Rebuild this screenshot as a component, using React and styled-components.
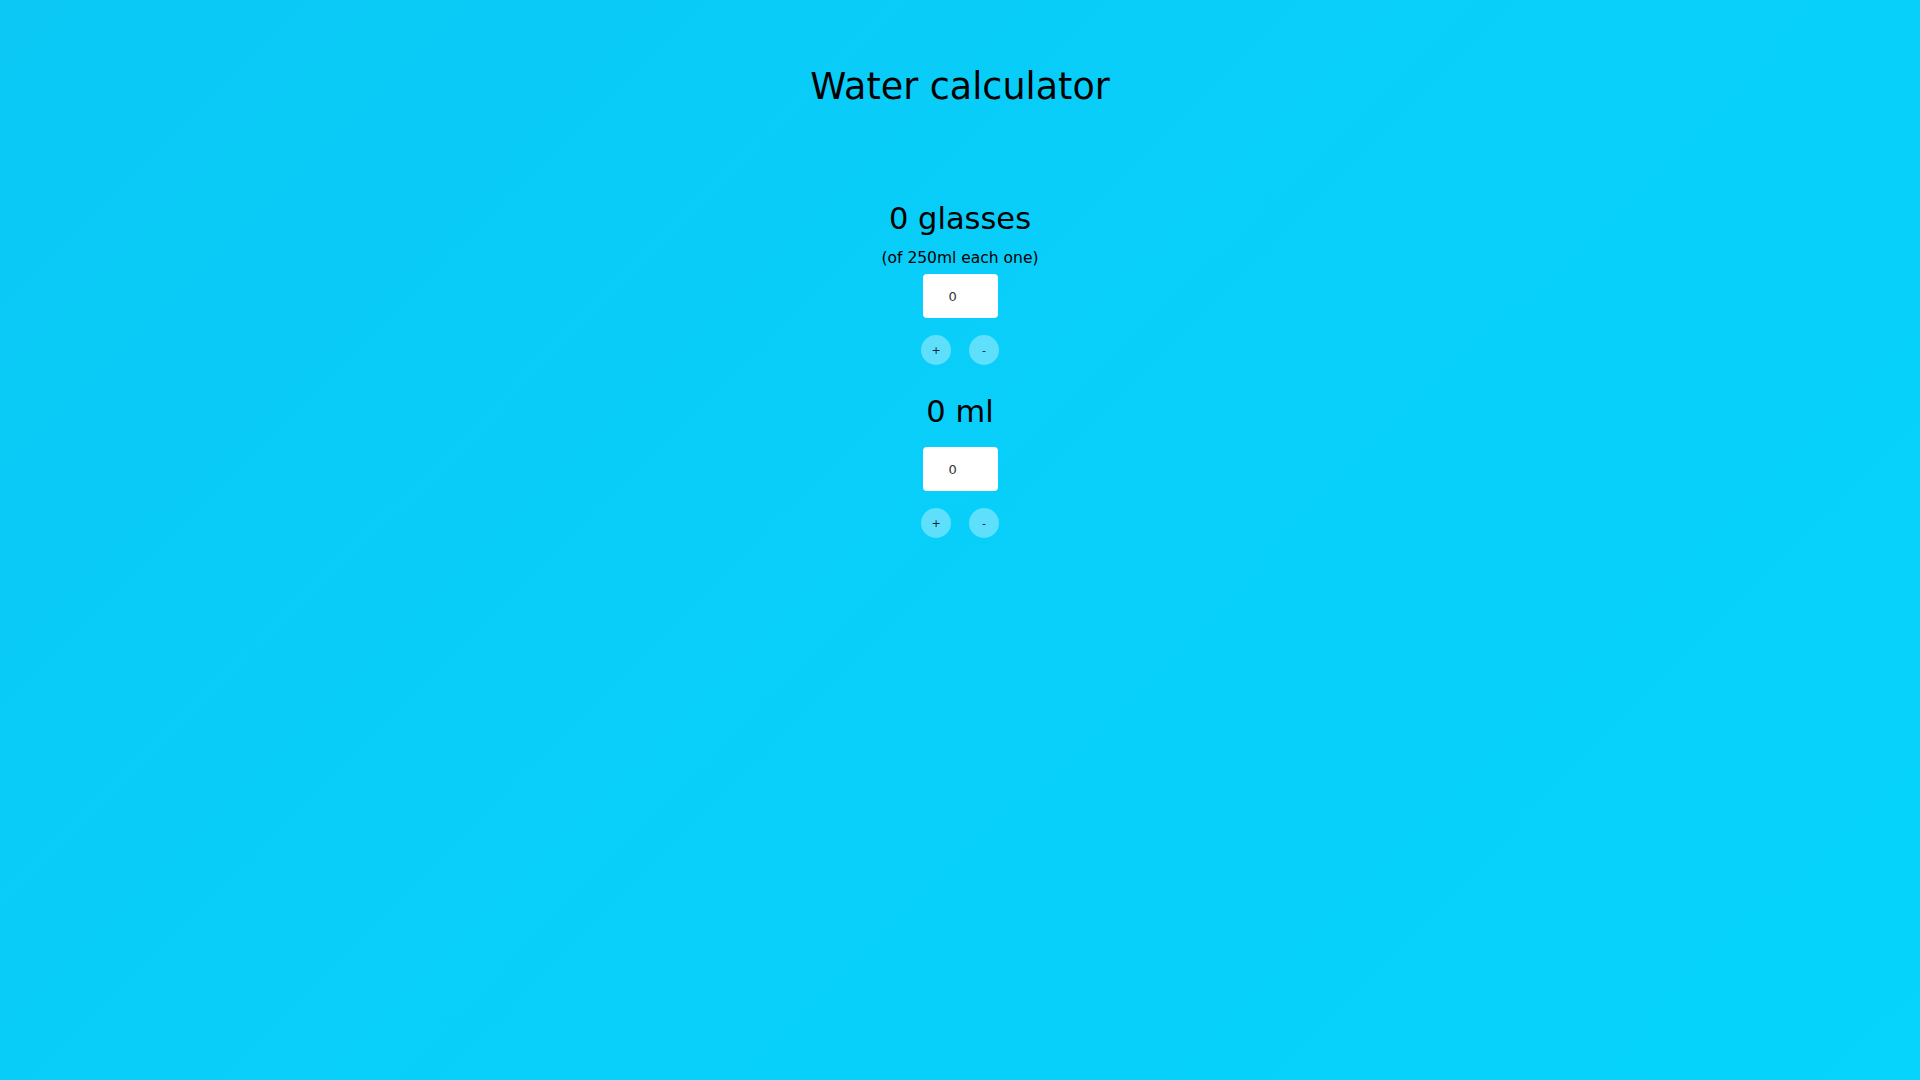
import React, { useState } from 'react'
import styled, { createGlobalStyle } from 'styled-components'

const GlobalStyle = createGlobalStyle`
    body {
        margin: 0;
        font-family: "DejaVu Sans", "Open Sans", sans-serif;
    }
`

const Counter = ({ title, note, value, onPlus, onMinus }) => {
    return (
        <Section>
            <Amount>{title}</Amount>
            {note && <Note>{note}</Note>}
            <Field type="text" value={value} readOnly />
            <Buttons>
                <Round onClick={onPlus}>+</Round>
                <Round onClick={onMinus}>-</Round>
            </Buttons>
        </Section>
    )
}

const App = () => {
    const [glasses, setGlasses] = useState(0)
    const [ml, setMl] = useState(0)
    return (
        <Page>
            <GlobalStyle />
            <Title>Water calculator</Title>
            <Counter
                title={`${glasses} glasses`}
                note="(of 250ml each one)"
                value={glasses}
                onPlus={() => setGlasses(glasses + 1)}
                onMinus={() => setGlasses(Math.max(0, glasses - 1))}
            />
            <Counter
                title={`${ml} ml`}
                value={ml}
                onPlus={() => setMl(ml + 250)}
                onMinus={() => setMl(Math.max(0, ml - 250))}
            />
        </Page>
    )
}

export default App

const Page = styled.div`
    min-height: 100vh;
    box-sizing: border-box;
    display: flex;
    flex-direction: column;
    align-items: center;
    padding-top: 65px;
    background: linear-gradient(135deg, #0bc8f5 0%, #08cffa 50%, #06d4fd 100%);
    color: #000;
`

const Title = styled.h1`
    margin: 0 0 91px 0;
    font-size: 36.5px;
    line-height: 44px;
    font-weight: 400;
`

const Section = styled.div`
    display: flex;
    flex-direction: column;
    align-items: center;
    margin-bottom: 28px;
`

const Amount = styled.h2`
    margin: 0;
    font-size: 30.5px;
    line-height: 38px;
    font-weight: 400;
`

const Note = styled.p`
    margin: 10px 0 -10px 0;
    font-size: 15.5px;
    line-height: 20px;
`

const Field = styled.input`
    margin-top: 16px;
    width: 75px;
    height: 44px;
    box-sizing: border-box;
    border: none;
    border-radius: 4px;
    padding: 0 0 0 26px;
    background: #fff;
    font-family: "DejaVu Sans", sans-serif;
    font-size: 13px;
    color: #333;
    outline: none;
`

const Buttons = styled.div`
    display: flex;
    gap: 18px;
    margin-top: 17px;
`

const Round = styled.button`
    width: 30px;
    height: 30px;
    padding: 0;
    border: none;
    border-radius: 50%;
    background: rgba(255, 255, 255, 0.35);
    font-family: "DejaVu Sans", sans-serif;
    font-size: 11px;
    color: #0a2540;
    cursor: pointer;
`
